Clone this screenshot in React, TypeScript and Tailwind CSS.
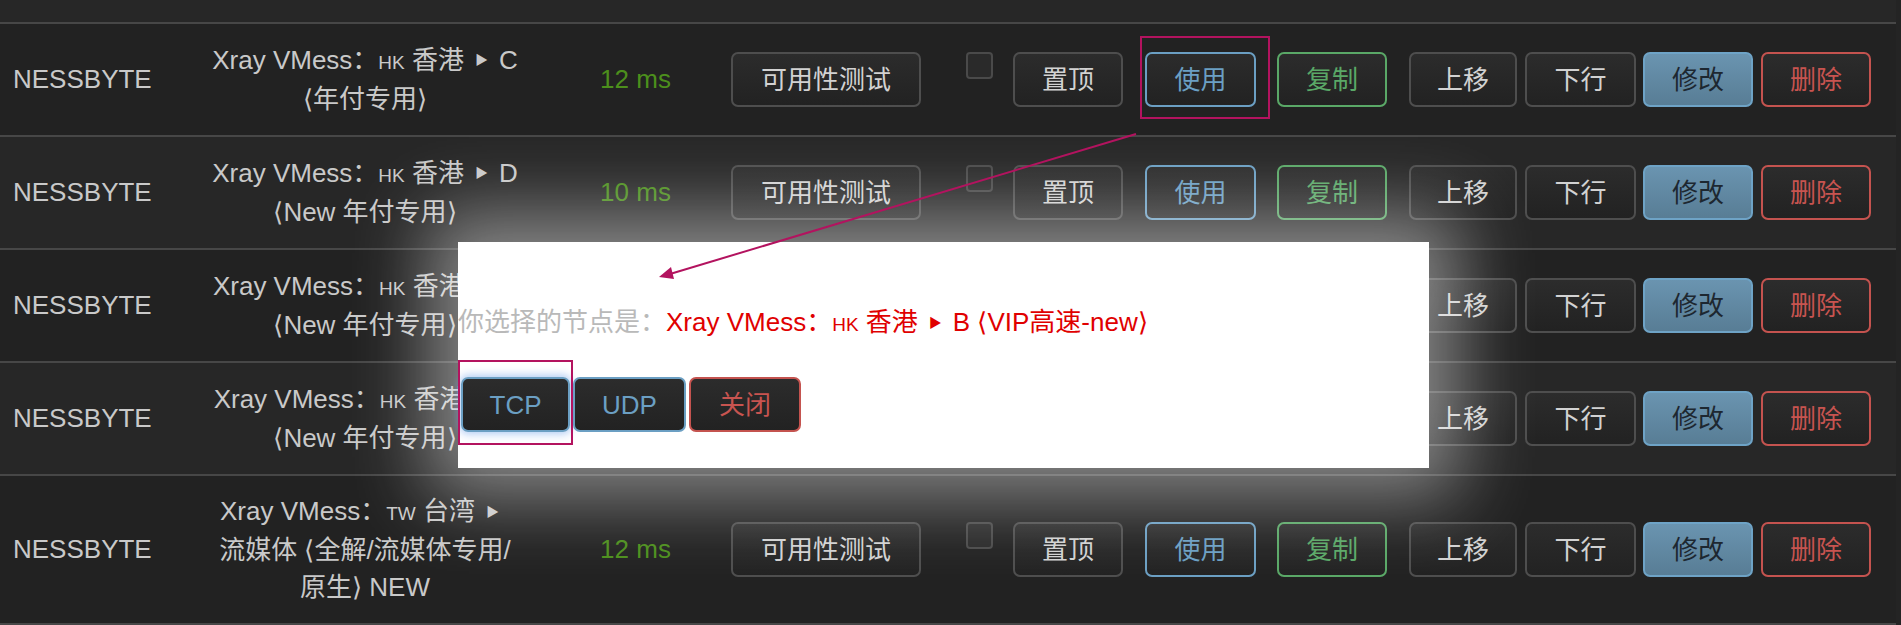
import React from "react";

// 节点列表 mock
const nodes = [
  { lines: [["Xray VMess：", "HK", " 香港", "C"], ["⟨年付专用⟩"]], ms: "12 ms" },
  { lines: [["Xray VMess：", "HK", " 香港", "D"], ["⟨New 年付专用⟩"]], ms: "10 ms" },
  { lines: [["Xray VMess：", "HK", " 香港", "E"], ["⟨New 年付专用⟩"]], ms: "11 ms" },
  { lines: [["Xray VMess：", "HK", " 香港", "F"], ["⟨New 年付专用⟩"]], ms: "13 ms" },
  {
    lines: [["Xray VMess：", "TW", " 台湾", ""], ["流媒体 ⟨全解/流媒体专用/"], ["原生⟩ NEW"]],
    ms: "12 ms",
  },
];

const btn =
  "h-[55px] shrink-0 rounded-[7px] border-2 bg-linear-to-b text-[26px] leading-none flex items-center justify-center";
const dark = "from-[#2c2c2c] to-[#222222]";
const grey = `${dark} border-[#4e4e4e] text-[#d2d2d2]`;
const blue = `${dark} border-[#6b9fc3] text-[#6b9fc3]`;
const green = `${dark} border-[#5aa867] text-[#5aa867]`;
const red = `${dark} border-[#c4534f] text-[#c85450]`;
const primary = "from-[#6a94b0] to-[#587d95] border-[#6ea3c6] text-[#1d2730]";

function Tri() {
  return <span className="inline-block align-middle text-[13px] leading-none mx-[11px] -mt-[4px]">▶</span>;
}

function NodeName({ lines }: { lines: string[][] }) {
  return (
    <div className="w-[350px] shrink-0 text-center text-[26px] leading-[37px] text-[#c9c9c9]">
      {lines.map((l, i) => (
        <div key={i}>
          {l[0]}
          {l[1] && <span className="text-[19px] uppercase">{l[1]}</span>}
          {l[2]}
          {l[3] !== undefined && (
            <>
              <Tri />
              {l[3]}
            </>
          )}
        </div>
      ))}
    </div>
  );
}

function Row({ node, even, last }: { node: (typeof nodes)[number]; even: boolean; last: boolean }) {
  return (
    <div
      className={`flex items-center border-b-2 border-[#474747] ${last ? "h-[149px]" : "h-[113px]"} ${
        even ? "bg-[#272727]" : "bg-[#222222]"
      }`}
    >
      <div className="w-[190px] shrink-0 pl-[13px] text-[26px] text-[#c9c9c9]">NESSBYTE</div>
      <NodeName lines={node.lines} />
      <div className="w-[191px] shrink-0 text-center text-[26px] text-[#4c8f1c]">{node.ms}</div>

      <div className="flex items-start">
        <button className={`${btn} ${grey} w-[190px]`}>可用性测试</button>
        <div className="ml-[45px] w-[27px] h-[27px] rounded-[4px] border-2 border-[#4a4a4a] bg-[#2a2a2a]" />
        <button className={`${btn} ${grey} ml-[20px] w-[110px]`}>置顶</button>
        <button className={`${btn} ${blue} ml-[22px] w-[111px]`}>使用</button>
        <button className={`${btn} ${green} ml-[21px] w-[110px]`}>复制</button>
        <button className={`${btn} ${grey} ml-[22px] w-[108px]`}>上移</button>
        <button className={`${btn} ${grey} ml-[8px] w-[111px]`}>下行</button>
        <button className={`${btn} ${primary} ml-[7px] w-[110px]`}>修改</button>
        <button className={`${btn} ${red} ml-[8px] w-[110px]`}>删除</button>
      </div>
    </div>
  );
}

export default function App() {
  return (
    <div className="relative w-[1901px] h-[625px] overflow-hidden bg-[#242424] font-['Liberation_Sans','Noto_Sans_CJK_SC',sans-serif]">
      {/* table */}
      <div className="w-[1896px]">
        <div className="h-[24px] bg-[#272727] border-b-2 border-[#474747]" />
        {nodes.map((n, i) => (
          <Row key={i} node={n} even={i % 2 === 1} last={i === nodes.length - 1} />
        ))}
      </div>

      {/* 弹窗 */}
      <div className="absolute left-[458px] top-[242px] w-[971px] h-[226px] bg-white shadow-[0_0_70px_30px_rgba(255,255,255,0.45)]">
        <div className="mt-[65px] text-[26px] leading-[30px] whitespace-nowrap">
          <span className="text-[#b9b9b9]">你选择的节点是：</span>
          <span className="text-[#e00000]">
            Xray VMess：<span className="text-[19px] uppercase">HK</span> 香港
            <Tri />B ⟨VIP高速-new⟩
          </span>
        </div>
        <div className="mt-[37px] ml-[3px] flex gap-[3px]">
          <button
            className={`${btn} ${blue} w-[109px] h-[53px] border-[#5d8fc8] shadow-[0_0_9px_2px_rgba(110,160,235,0.55)]`}
          >
            TCP
          </button>
          <button className={`${btn} ${blue} w-[113px] h-[53px]`}>UDP</button>
          <button className={`${btn} ${red} w-[112px] h-[53px]`}>关闭</button>
        </div>
      </div>

      {/* 标注 */}
      <svg className="absolute inset-0 pointer-events-none" width="1901" height="625">
        <rect x="1141" y="37" width="128" height="81" fill="none" stroke="#b3135f" strokeWidth="2" />
        <rect x="459" y="361" width="113" height="83" fill="none" stroke="#b3135f" strokeWidth="2" />
        <line x1="1136" y1="134" x2="670" y2="274" stroke="#b3135f" strokeWidth="2" />
        <polygon points="659,277 674,279 671,267" fill="#b3135f" />
      </svg>
    </div>
  );
}
